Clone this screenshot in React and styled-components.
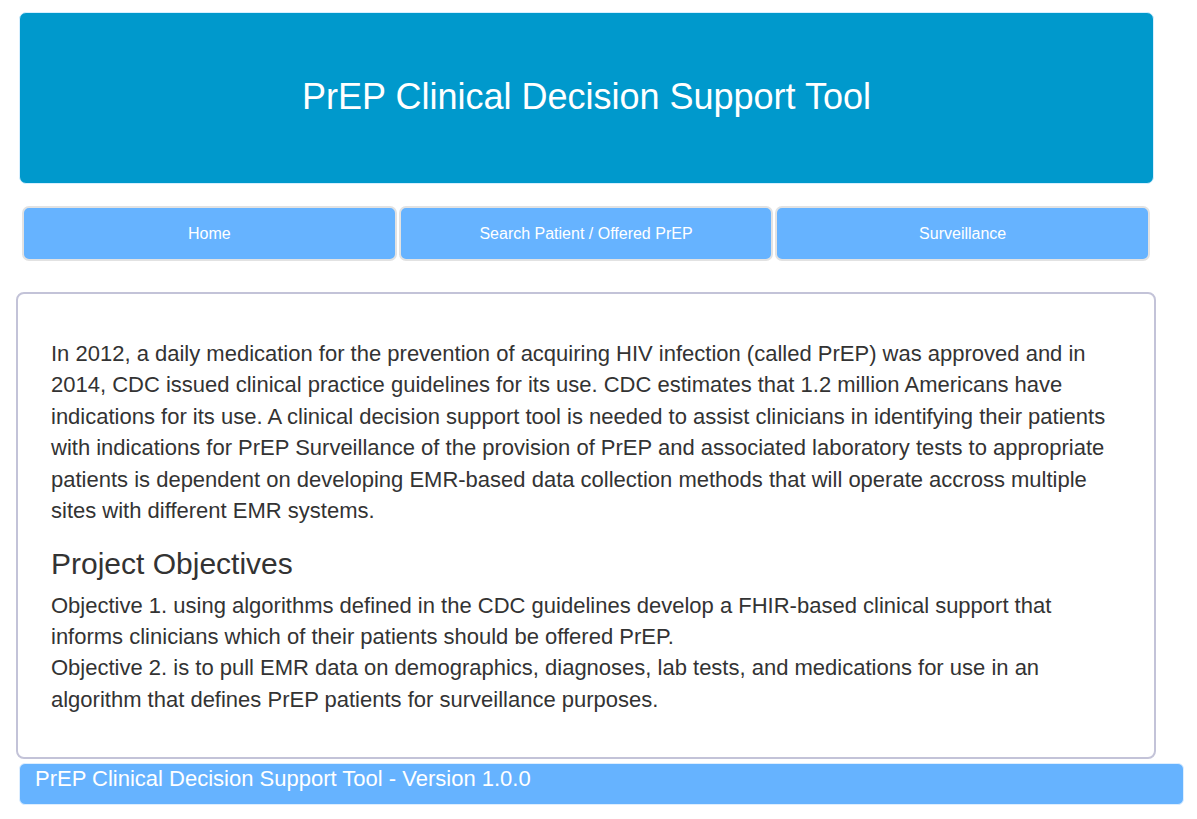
import styled, { createGlobalStyle } from "styled-components";

const GlobalStyle = createGlobalStyle`
  body {
    margin: 0;
    background: #fff;
    font-family: "Liberation Sans", Arial, Helvetica, sans-serif;
    color: #333;
  }
`;

const Page = styled.div`
  padding: 12px 0 0 16px;
  width: 1168px;
`;

const Header = styled.header`
  margin-left: 3px;
  width: 1135px;
  height: 172px;
  box-sizing: border-box;
  background: #0099cc;
  border: 1px solid #d6efff;
  border-radius: 7px;
  display: flex;
  align-items: center;
  justify-content: center;

  h1 {
    margin: 0 0 2px;
    color: #fff;
    font-weight: 400;
    font-size: 36px;
  }
`;

const Nav = styled.nav`
  margin: 22px 0 0 6px;
  width: 1128px;
  display: grid;
  grid-template-columns: repeat(3, 1fr);
  gap: 2px;
`;

const NavButton = styled.button`
  height: 55px;
  padding-top: 2px;
  background: #66b3ff;
  border: 2px solid #e2e2e2;
  border-radius: 7px;
  color: #fff;
  font-family: inherit;
  font-size: 16px;
  cursor: pointer;
`;

const Card = styled.main`
  margin-top: 31px;
  width: 1140px;
  height: 467px;
  box-sizing: border-box;
  border: 2px solid #c3c3d8;
  border-radius: 8px;
  padding: 44px 33px 0 33px;

  p {
    margin: 0;
    font-size: 22px;
    line-height: 1.42857;
  }

  h3 {
    margin: 20px 0 10px;
    font-size: 30px;
    font-weight: 400;
    line-height: 1.1;
  }
`;

const Footer = styled.footer`
  margin: 4px 0 0 3px;
  width: 1165px;
  height: 42px;
  box-sizing: border-box;
  background: #66b3ff;
  border: 1px solid #ddeeff;
  border-radius: 6px;
  color: #fff;
  font-size: 22px;
  padding: 0 0 0 15px;
  line-height: 29px;
`;

const navItems = ["Home", "Search Patient / Offered PrEP", "Surveillance"];

export default function App() {
  return (
    <>
      <GlobalStyle />
      <Page>
        <Header>
          <h1>PrEP Clinical Decision Support Tool</h1>
        </Header>
        <Nav>
          {navItems.map((item) => (
            <NavButton key={item}>{item}</NavButton>
          ))}
        </Nav>
        <Card>
          <p>
            In 2012, a daily medication for the prevention of acquiring HIV infection (called PrEP) was approved and in
            2014, CDC issued clinical practice guidelines for its use. CDC estimates that 1.2 million Americans have
            indications for its use. A clinical decision support tool is needed to assist clinicians in identifying their patients
            with indications for PrEP Surveillance of the provision of PrEP and associated laboratory tests to appropriate
            patients is dependent on developing EMR-based data collection methods that will operate accross multiple
            sites with different EMR systems.
          </p>
          <h3>Project Objectives</h3>
          <p>
            Objective 1. using algorithms defined in the CDC guidelines develop a FHIR-based clinical support that
            informs clinicians which of their patients should be offered PrEP.
          </p>
          <p>
            Objective 2. is to pull EMR data on demographics, diagnoses, lab tests, and medications for use in an
            algorithm that defines PrEP patients for surveillance purposes.
          </p>
        </Card>
        <Footer>PrEP Clinical Decision Support Tool - Version 1.0.0</Footer>
      </Page>
    </>
  );
}
